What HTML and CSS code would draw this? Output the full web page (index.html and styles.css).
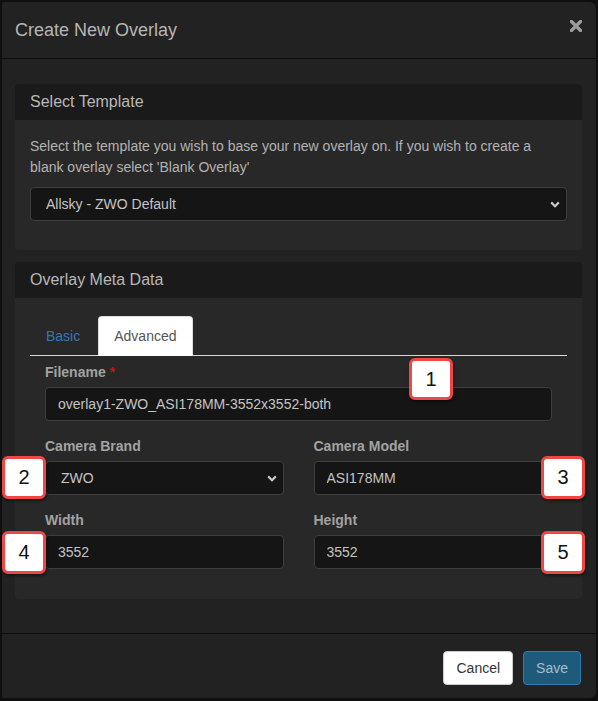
FILE: index.html
```html
<!DOCTYPE html>
<html lang="en">
<head>
<meta charset="utf-8">
<title>Create New Overlay</title>
<link rel="stylesheet" href="styles.css">
</head>
<body>
<div class="modal">
  <div class="modal-header">
    <h4 class="modal-title">Create New Overlay</h4>
    <button class="close" type="button" aria-label="Close">
      <svg width="12" height="12" viewBox="0 0 12 12"><path d="M1.5 1.5 L10.5 10.5 M10.5 1.5 L1.5 10.5" stroke="#9c9c9c" stroke-width="3.4" stroke-linecap="square" fill="none"/></svg>
    </button>
  </div>
  <div class="modal-body">
    <div class="panel">
      <div class="panel-heading">Select Template</div>
      <div class="panel-body first">
        <p class="intro">Select the template you wish to base your new overlay on. If you wish to create a blank overlay select 'Blank Overlay'</p>
        <div class="select-wrap">
          <select class="form-control"><option>Allsky - ZWO Default</option></select>
          <svg class="chev" width="10" height="7" viewBox="0 0 10 7"><path d="M1.2 1.4 L5 5.2 L8.8 1.4" stroke="#c8c8c8" stroke-width="2.2" fill="none"/></svg>
        </div>
      </div>
    </div>
    <div class="panel last">
      <div class="panel-heading">Overlay Meta Data</div>
      <div class="panel-body second">
        <ul class="nav-tabs">
          <li><a href="#">Basic</a></li>
          <li class="active"><a href="#">Advanced</a></li>
        </ul>
        <div class="tab-content">
          <div class="row">
            <div class="col full">
              <label>Filename <span class="req">*</span></label>
              <input class="form-control" type="text" value="overlay1-ZWO_ASI178MM-3552x3552-both">
            </div>
          </div>
          <div class="row">
            <div class="col">
              <label>Camera Brand</label>
              <div class="select-wrap">
                <select class="form-control"><option>ZWO</option></select>
                <svg class="chev" width="10" height="7" viewBox="0 0 10 7"><path d="M1.2 1.4 L5 5.2 L8.8 1.4" stroke="#c8c8c8" stroke-width="2.2" fill="none"/></svg>
              </div>
            </div>
            <div class="col">
              <label>Camera Model</label>
              <input class="form-control" type="text" value="ASI178MM">
            </div>
          </div>
          <div class="row">
            <div class="col">
              <label>Width</label>
              <input class="form-control" type="text" value="3552">
            </div>
            <div class="col">
              <label>Height</label>
              <input class="form-control" type="text" value="3552">
            </div>
          </div>
        </div>
      </div>
    </div>
  </div>
  <div class="modal-footer">
    <button class="btn btn-default" type="button">Cancel</button>
    <button class="btn btn-primary" type="button">Save</button>
  </div>
</div>

<div class="badge b1">1</div>
<div class="badge b2">2</div>
<div class="badge b3">3</div>
<div class="badge b4">4</div>
<div class="badge b5">5</div>
</body>
</html>
```

FILE: styles.css
```css
* { box-sizing: border-box; }

html, body {
  margin: 0;
  padding: 0;
  background: #0f0f0f;
  width: 598px;
  height: 701px;
  overflow: hidden;
}

body {
  font-family: "Liberation Sans", Arial, sans-serif;
  font-size: 14px;
  line-height: 20px;
  color: #b4b4b4;
  position: relative;
}

.modal {
  margin: 2px 0 0 2px;
  width: 594px;
  background: #222222;
  border-radius: 2px 6px 6px 2px;
}

.modal-header {
  display: flex;
  align-items: flex-start;
  justify-content: space-between;
  padding: 15px 14px 15px 13px;
  border-bottom: 1px solid #0d0d0d;
}

.modal-title {
  margin: 0;
  font-size: 18px;
  line-height: 26px;
  font-weight: normal;
  color: #b6b6b6;
}

.close {
  background: none;
  border: 0;
  padding: 0;
  margin: 3px 0 0 0;
  width: 12px;
  height: 12px;
  display: flex;
  cursor: pointer;
}

.modal-body {
  padding: 25px 14px 14px 13px;
}

.panel {
  background: #282828;
  border-radius: 4px;
  margin-bottom: 12px;
  overflow: hidden;
}

.panel.last { margin-bottom: 20px; }

.panel-heading {
  background: #1a1a1a;
  padding: 7px 15px;
  font-size: 16px;
  line-height: 22px;
  color: #b8b8b8;
}

.panel-body { padding: 15px; }
.panel-body.first { padding: 16px 15px 29px 15px; }
.panel-body.second { padding: 18px 15px 15px 15px; }

.intro {
  margin: 0 0 9px 0;
  line-height: 21px;
  color: #b3b3b3;
}

.form-control {
  display: block;
  width: 100%;
  height: 34px;
  padding: 6px 12px;
  font-family: "Liberation Sans", Arial, sans-serif;
  font-size: 14px;
  line-height: 20px;
  color: #c4c4c4;
  background: #151515;
  border: 1px solid #3e3e3e;
  border-radius: 4px;
  outline: none;
}

select.form-control {
  appearance: none;
  -webkit-appearance: none;
  padding-left: 15px;
}

.select-wrap { position: relative; }

.chev {
  position: absolute;
  right: 7px;
  top: 14px;
  pointer-events: none;
}

.nav-tabs {
  list-style: none;
  margin: 0;
  padding: 0;
  display: flex;
  border-bottom: 1px solid #d9d9d9;
}

.nav-tabs li {
  margin-bottom: -1px;
  margin-right: 2px;
}

.nav-tabs a {
  display: block;
  padding: 9px 15px;
  line-height: 20px;
  border: 1px solid transparent;
  border-radius: 4px 4px 0 0;
  color: #3577b2;
  text-decoration: none;
}

.nav-tabs li.active a {
  background: #ffffff;
  color: #555555;
  border-color: #dddddd #dddddd transparent;
}

.tab-content { padding-top: 6px; }

.row {
  display: flex;
  margin-bottom: 15px;
}

.col {
  flex: 1 1 0;
  padding: 0 15px;
}

label {
  display: block;
  margin-bottom: 5px;
  font-weight: bold;
  color: #a2a2a2;
}

.req { color: #cc1111; }

.modal-footer {
  display: flex;
  justify-content: flex-end;
  gap: 10px;
  padding: 17px 15px 13px 16px;
  border-top: 1px solid #0d0d0d;
}

.btn {
  height: 34px;
  padding: 6px 12px;
  font-family: "Liberation Sans", Arial, sans-serif;
  font-size: 14px;
  line-height: 20px;
  border-radius: 4px;
  border: 1px solid transparent;
  cursor: pointer;
}

.btn-default {
  background: #ffffff;
  color: #333333;
  border-color: #cccccc;
}

.btn-primary {
  background: #1e5a7b;
  color: #a9bccb;
  border-color: #2a7cb1;
}

.badge {
  position: absolute;
  width: 44px;
  height: 42px;
  background: #ffffff;
  border: 3px solid #ef4646;
  border-radius: 6px;
  box-shadow: 1px 2px 3px rgba(0, 0, 0, 0.45);
  color: #111111;
  font-family: "Liberation Sans", Arial, sans-serif;
  font-size: 20px;
  line-height: 36px;
  text-align: center;
}

.b1 { left: 409px; top: 358px; }
.b2 { left: 2px; top: 456px; height: 43px; }
.b3 { left: 541px; top: 456px; height: 43px; }
.b4 { left: 2px; top: 531px; height: 43px; }
.b5 { left: 541px; top: 531px; height: 43px; }
```
